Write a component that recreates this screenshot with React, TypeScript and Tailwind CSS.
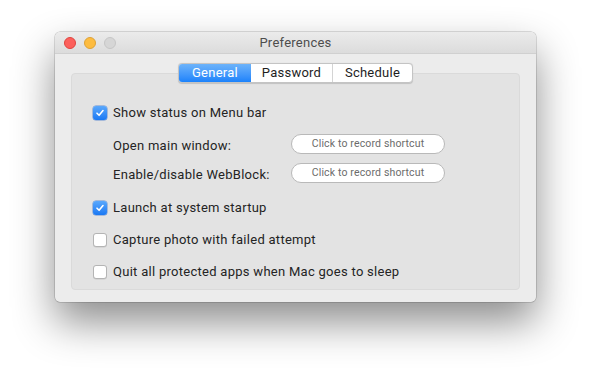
import React from 'react';

const font = { fontFamily: 'Roboto, "Liberation Sans", sans-serif' };

const Check = ({ checked }: { checked: boolean }) =>
  checked ? (
    <div className="flex h-[14px] w-[14px] shrink-0 items-center justify-center rounded-[3px] bg-gradient-to-b from-[#5aa8fc] to-[#1878f3] shadow-[0_0_0_0.5px_rgba(20,90,200,0.6)]">
      <svg width="10" height="10" viewBox="0 0 10 10">
        <path d="M2 5.2 L4.1 7.3 L8 2.6" fill="none" stroke="white" strokeWidth="1.6" strokeLinecap="round" strokeLinejoin="round" />
      </svg>
    </div>
  ) : (
    <div className="h-[14px] w-[14px] shrink-0 rounded-[3px] border border-[#b4b4b4] bg-white shadow-[0_0.5px_0.5px_rgba(0,0,0,0.12)]" />
  );

const CheckRow = ({ checked, label, className }: { checked: boolean; label: string; className: string }) => (
  <div className={`flex h-[20px] items-center gap-[6px] pl-[21px] ${className}`}>
    <Check checked={checked} />
    <span className="text-[13px] tracking-[0.28px] text-[#242424]">{label}</span>
  </div>
);

const ShortcutRow = ({ label, className }: { label: string; className: string }) => (
  <div className={`flex h-[20px] items-center pl-[41px] ${className}`}>
    <span className="w-[178px] pt-[3px] text-[13px] tracking-[0.28px] text-[#242424]">{label}</span>
    <div className="flex h-[20px] w-[154px] items-center justify-center rounded-full border border-[#b9b9b9] bg-white text-[10.5px] tracking-[0.15px] text-[#6b6b6b]">
      Click to record shortcut
    </div>
  </div>
);

export default function App() {
  const tabs = [
    { name: 'General', w: 'w-[72px]', active: true },
    { name: 'Password', w: 'w-[81px]', active: false },
    { name: 'Schedule', w: 'w-[80px]', active: false },
  ];

  return (
    <div className="h-[382px] w-[592px] overflow-hidden bg-white pl-[55px] pt-[32px]" style={font}>
      <div className="h-[270px] w-[481px] rounded-[5px] bg-[#ececec] shadow-[0_20px_42px_rgba(0,0,0,0.45),0_0_0_0.5px_rgba(0,0,0,0.25)]">
        {/* Title bar */}
        <div className="grid h-[22px] grid-cols-[1fr_auto_1fr] items-center rounded-t-[5px] border-b border-[#d0d0d0] bg-gradient-to-b from-[#ebebeb] to-[#dcdcdc]">
          <div className="flex items-center gap-[8px] pl-[9px]">
            <div className="h-[12px] w-[12px] rounded-full border border-[#e0443e] bg-[#fc605c]" />
            <div className="h-[12px] w-[12px] rounded-full border border-[#dea236] bg-[#fdbc40]" />
            <div className="h-[12px] w-[12px] rounded-full border border-[#c6c6c6] bg-[#d6d6d6]" />
          </div>
          <span className="text-[13px] tracking-[0.25px] text-[#4d4d4d]">Preferences</span>
          <div />
        </div>

        {/* Content */}
        <div className="px-[16px] pt-[9px]">
          <div className="relative z-10 -mb-[10px] flex justify-center">
            <div className="flex h-[20px] overflow-hidden rounded-[4px] border border-[#c4c4c4] bg-white shadow-[0_0.5px_1px_rgba(0,0,0,0.15)]">
              {tabs.map((t, i) => (
                <div
                  key={t.name}
                  className={`flex items-center justify-center text-[13px] tracking-[0.25px] ${t.w} ${
                    t.active
                      ? 'bg-gradient-to-b from-[#6cb3fa] to-[#1a82fb] text-white'
                      : 'text-[#1e1e1e]'
                  } ${i === 2 ? 'border-l border-[#d4d4d4]' : ''}`}
                >
                  {t.name}
                </div>
              ))}
            </div>
          </div>
          <div className="h-[217px] rounded-[4px] border border-[#dadada] bg-[#e3e3e3] pt-[29px]">
            <CheckRow checked label="Show status on Menu bar" className="" />
            <ShortcutRow label="Open main window:" className="mt-[11px]" />
            <ShortcutRow label="Enable/disable WebBlock:" className="mt-[9px]" />
            <CheckRow checked label="Launch at system startup" className="mt-[15px]" />
            <CheckRow checked={false} label="Capture photo with failed attempt" className="mt-[12px]" />
            <CheckRow checked={false} label="Quit all protected apps when Mac goes to sleep" className="mt-[12px]" />
          </div>
        </div>
      </div>
    </div>
  );
}
